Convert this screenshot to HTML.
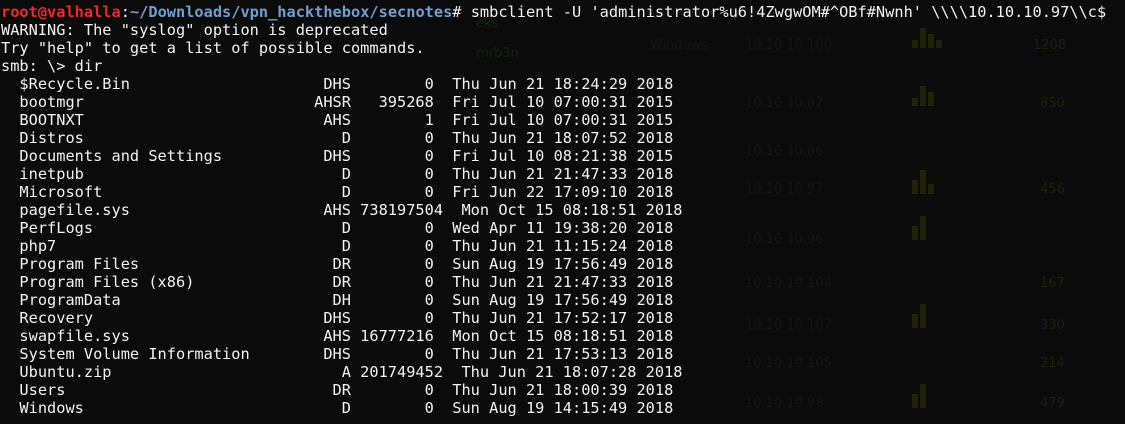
<!DOCTYPE html>
<html><head><meta charset="utf-8"><style>
html,body{margin:0;padding:0;background:#0b0b0b;width:1125px;height:424px;overflow:hidden}
.t{position:absolute;left:1px;top:3px;font-family:"DejaVu Sans Mono","Liberation Mono",monospace;font-size:15.3px;line-height:18px;color:#f2f2f2;white-space:pre}
.red{color:#ef2929;font-weight:bold}
.blue{color:#729fcf;font-weight:bold}
.g{position:absolute;font-family:"DejaVu Sans","Liberation Sans",sans-serif;font-size:13px;white-space:nowrap}
.bar{position:absolute;width:6px;background:#222207}
</style></head><body>
<div class="g" style="left:476px;top:16px;color:#162016">eks</div>
<div class="g" style="left:476px;top:46px;color:#162016">mrb3n</div>
<div class="g" style="left:650px;top:38px;color:#151515">Windows</div>
<div class="g" style="left:745px;top:38px;color:#151515">10.10.10.100</div>
<div class="g" style="left:745px;top:96px;color:#151515">10.10.10.87</div>
<div class="g" style="left:745px;top:144px;color:#151515">10.10.10.86</div>
<div class="g" style="left:745px;top:182px;color:#151515">10.10.10.97</div>
<div class="g" style="left:745px;top:232px;color:#151515">10.10.10.96</div>
<div class="g" style="left:745px;top:276px;color:#151515">10.10.10.104</div>
<div class="g" style="left:745px;top:318px;color:#151515">10.10.10.107</div>
<div class="g" style="left:745px;top:356px;color:#151515">10.10.10.105</div>
<div class="g" style="left:745px;top:396px;color:#151515">10.10.10.98</div>
<div class="g" style="left:1033px;top:38px;color:#20200a">1208</div>
<div class="g" style="left:1040px;top:96px;color:#20200a">850</div>
<div class="g" style="left:1040px;top:182px;color:#20200a">456</div>
<div class="g" style="left:1040px;top:276px;color:#20200a">167</div>
<div class="g" style="left:1040px;top:318px;color:#20200a">330</div>
<div class="g" style="left:1040px;top:356px;color:#20200a">214</div>
<div class="g" style="left:1040px;top:396px;color:#20200a">479</div>
<div class="bar" style="left:912px;top:40px;height:8px"></div>
<div class="bar" style="left:920px;top:28px;height:20px"></div>
<div class="bar" style="left:928px;top:34px;height:14px"></div>
<div class="bar" style="left:936px;top:40px;height:8px"></div>
<div class="bar" style="left:912px;top:98px;height:8px"></div>
<div class="bar" style="left:920px;top:86px;height:20px"></div>
<div class="bar" style="left:928px;top:92px;height:14px"></div>
<div class="bar" style="left:912px;top:180px;height:14px"></div>
<div class="bar" style="left:920px;top:170px;height:24px"></div>
<div class="bar" style="left:928px;top:184px;height:10px"></div>
<div class="bar" style="left:912px;top:226px;height:14px"></div>
<div class="bar" style="left:920px;top:216px;height:24px"></div>
<div class="bar" style="left:912px;top:314px;height:14px"></div>
<div class="bar" style="left:920px;top:304px;height:24px"></div>
<div class="bar" style="left:912px;top:394px;height:14px"></div>
<div class="bar" style="left:920px;top:384px;height:24px"></div>
<div class="t"><div><span class="red">root@valhalla</span>:<span class="blue">~/Downloads/vpn_hackthebox/secnotes</span># smbclient -U 'administrator%u6!4ZwgwOM#^OBf#Nwnh' \\\\10.10.10.97\\c$</div><div>WARNING: The "syslog" option is deprecated</div><div>Try "help" to get a list of possible commands.</div><div>smb: \&gt; dir</div><div>  $Recycle.Bin                     DHS        0  Thu Jun 21 18:24:29 2018</div><div>  bootmgr                         AHSR   395268  Fri Jul 10 07:00:31 2015</div><div>  BOOTNXT                          AHS        1  Fri Jul 10 07:00:31 2015</div><div>  Distros                            D        0  Thu Jun 21 18:07:52 2018</div><div>  Documents and Settings           DHS        0  Fri Jul 10 08:21:38 2015</div><div>  inetpub                            D        0  Thu Jun 21 21:47:33 2018</div><div>  Microsoft                          D        0  Fri Jun 22 17:09:10 2018</div><div>  pagefile.sys                     AHS 738197504  Mon Oct 15 08:18:51 2018</div><div>  PerfLogs                           D        0  Wed Apr 11 19:38:20 2018</div><div>  php7                               D        0  Thu Jun 21 11:15:24 2018</div><div>  Program Files                     DR        0  Sun Aug 19 17:56:49 2018</div><div>  Program Files (x86)               DR        0  Thu Jun 21 21:47:33 2018</div><div>  ProgramData                       DH        0  Sun Aug 19 17:56:49 2018</div><div>  Recovery                         DHS        0  Thu Jun 21 17:52:17 2018</div><div>  swapfile.sys                     AHS 16777216  Mon Oct 15 08:18:51 2018</div><div>  System Volume Information        DHS        0  Thu Jun 21 17:53:13 2018</div><div>  Ubuntu.zip                         A 201749452  Thu Jun 21 18:07:28 2018</div><div>  Users                             DR        0  Thu Jun 21 18:00:39 2018</div><div>  Windows                            D        0  Sun Aug 19 14:15:49 2018</div></div>
</body></html>
